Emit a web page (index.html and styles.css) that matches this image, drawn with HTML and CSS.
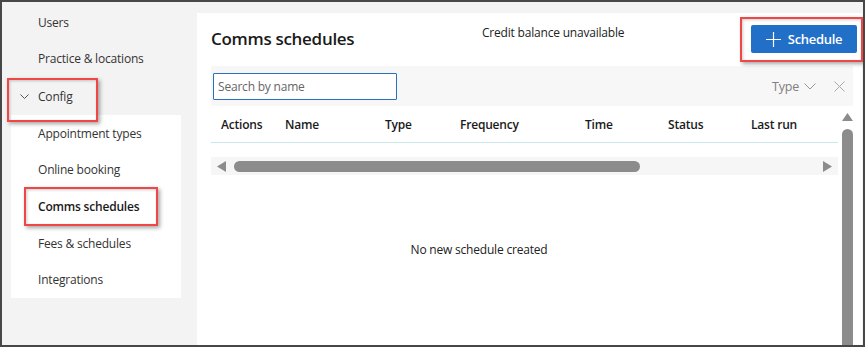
FILE: index.html
```html
<!DOCTYPE html>
<html lang="en">
<head>
  <meta charset="UTF-8">
  <meta name="viewport" content="width=device-width, initial-scale=1.0">
  <title>Comms schedules</title>
  <link rel="stylesheet" href="styles.css">
</head>
<body>
  <div class="frame">
    <aside class="sidebar">
      <div class="nav-item">Users</div>
      <div class="nav-item">Practice &amp; locations</div>
      <div class="nav-item nav-group">
        <span class="callout callout-config">
          <svg class="chevron" width="9" height="5" viewBox="0 0 9 5"><path d="M0.5 0.5 L4.5 4.5 L8.5 0.5" fill="none" stroke="#555" stroke-width="1"/></svg>
          Config
        </span>
      </div>
      <div class="subnav">
        <div class="nav-item">Appointment types</div>
        <div class="nav-item">Online booking</div>
        <div class="nav-item current"><span class="callout callout-current">Comms schedules</span></div>
        <div class="nav-item">Fees &amp; schedules</div>
        <div class="nav-item">Integrations</div>
      </div>
    </aside>

    <main class="panel">
      <header class="panel-head">
        <h1>Comms schedules</h1>
        <span class="credit">Credit balance unavailable</span>
        <button class="btn-primary callout callout-btn">
          <svg width="15" height="15" viewBox="0 0 15 15"><path d="M7.5 0 V15 M0 7.5 H15" stroke="#fff" stroke-width="1.2"/></svg>
          Schedule
        </button>
      </header>

      <div class="filter-bar">
        <input class="search" type="text" placeholder="Search by name">
        <span class="type-filter">Type
          <svg width="12" height="7" viewBox="0 0 12 7"><path d="M0.5 0.5 L6 6 L11.5 0.5" fill="none" stroke="#999" stroke-width="1"/></svg>
        </span>
        <svg class="clear" width="11" height="11" viewBox="0 0 11 11"><path d="M0.5 0.5 L10.5 10.5 M10.5 0.5 L0.5 10.5" stroke="#aaa" stroke-width="1"/></svg>
      </div>

      <div class="table-area">
        <div class="table-main">
          <div class="thead">
            <span>Actions</span>
            <span>Name</span>
            <span>Type</span>
            <span>Frequency</span>
            <span>Time</span>
            <span>Status</span>
            <span>Last run</span>
          </div>
          <div class="hscroll">
            <svg width="9" height="11" viewBox="0 0 9 11"><path d="M0 5.5 L9 0 V11 Z" fill="#8c8c8c"/></svg>
            <div class="hthumb"></div>
            <svg width="9" height="11" viewBox="0 0 9 11"><path d="M9 5.5 L0 0 V11 Z" fill="#8c8c8c"/></svg>
          </div>
          <div class="empty">No new schedule created</div>
        </div>
        <div class="vscroll">
          <svg width="11" height="8" viewBox="0 0 11 8"><path d="M5.5 0 L11 8 H0 Z" fill="#8c8c8c"/></svg>
          <div class="vthumb"></div>
        </div>
      </div>
    </main>
  </div>
</body>
</html>
```

FILE: styles.css
```css
* {
  box-sizing: border-box;
}

body {
  margin: 0;
  font-family: "Open Sans", "Noto Sans", sans-serif;
  font-size: 12px;
  letter-spacing: -0.2px;
  color: #222;
}

.frame {
  width: 865px;
  height: 347px;
  border: 2px solid #474747;
  background: #f3f3f3;
  display: flex;
  overflow: hidden;
}

/* sidebar */

.sidebar {
  width: 195px;
  flex-shrink: 0;
  padding-top: 2px;
}

.nav-item {
  height: 36px;
  display: flex;
  align-items: center;
  padding-left: 36px;
  color: #333;
}

.nav-group {
  margin-top: 2px;
  padding-left: 18px;
}

.subnav {
  margin: 1px 0 0 9px;
  width: 170px;
  background: #fff;
  padding: 0 0 1px;
}

.subnav .nav-item {
  padding-left: 27px;
}

.nav-item.current {
  height: 38px;
  font-weight: 600;
  color: #1a1a1a;
}

.chevron {
  margin-right: 9px;
}

/* red annotation boxes */

.callout {
  position: relative;
  display: inline-flex;
  align-items: center;
}

.callout::after {
  content: '';
  position: absolute;
  border: 2px solid #ef4646;
  box-shadow: 2px 2px 4px rgba(0, 0, 0, 0.35), inset 1px 1px 3px rgba(0, 0, 0, 0.2);
  pointer-events: none;
}

.callout-config::after {
  top: -10px;
  bottom: -17px;
  left: -13px;
  right: -25px;
}

.callout-current::after {
  top: -11px;
  bottom: -11px;
  left: -14px;
  right: -19px;
}

.callout-btn::after {
  top: -8px;
  bottom: -9px;
  left: -11px;
  right: -6px;
}

/* main panel */

.panel {
  flex: 1;
  background: #fff;
  margin: 11px 1px 0 0;
  padding: 12px 5px 0 14px;
  display: flex;
  flex-direction: column;
}

.panel-head {
  display: flex;
  align-items: flex-start;
  height: 41px;
}

.panel-head h1 {
  margin: 0;
  width: 271px;
  font-size: 17px;
  font-weight: 600;
  letter-spacing: -0.3px;
  line-height: 27px;
  color: #1a1a1a;
}

.credit {
  flex: 1;
  line-height: 16px;
}

.btn-primary {
  width: 106px;
  height: 28px;
  border: none;
  border-radius: 2px;
  background: #226fc7;
  color: #fff;
  font-family: inherit;
  font-size: 13px;
  font-weight: 600;
  letter-spacing: -0.3px;
  justify-content: center;
  gap: 7px;
  padding: 0;
}

.filter-bar {
  height: 40px;
  margin-right: 4px;
  background: #f7f7f7;
  display: flex;
  align-items: center;
  padding: 0 8px 0 2px;
}

.search {
  width: 184px;
  height: 27px;
  border: 1px solid #2b6fc2;
  border-radius: 1px;
  padding: 0 4px;
  font-family: inherit;
  font-size: 12px;
  letter-spacing: -0.2px;
  color: #333;
  background: #fff;
}

.search::placeholder {
  color: #666;
}

.type-filter {
  margin-left: auto;
  color: #808080;
  display: flex;
  align-items: center;
  gap: 5px;
  font-size: 12.5px;
}

.clear {
  margin-left: 18px;
}

/* table */

.table-area {
  flex: 1;
  display: flex;
  gap: 4px;
  margin-right: 4px;
}

.table-main {
  flex: 1;
}

.thead {
  height: 37px;
  display: grid;
  grid-template-columns: 64px 100px 75px 125px 83px 83px 1fr;
  align-items: center;
  padding-left: 10px;
  border-bottom: 1px solid #cbe7eb;
  font-weight: 600;
  color: #1a1a1a;
}

.hscroll {
  margin-top: 14px;
  height: 18px;
  background: #f6f6f6;
  display: flex;
  align-items: center;
  padding: 0 6px;
}

.hthumb {
  width: 406px;
  height: 11px;
  border-radius: 6px;
  background: #8c8c8c;
  margin-left: 8px;
  margin-right: auto;
}

.empty {
  width: 536px;
  margin-top: 67px;
  text-align: center;
  line-height: 16px;
  color: #222;
}

.vscroll {
  width: 11px;
  padding-top: 7px;
  display: flex;
  flex-direction: column;
}

.vthumb {
  flex: 1;
  margin-top: 8px;
  background: #8c8c8c;
  border-radius: 6px 6px 0 0;
}
```
